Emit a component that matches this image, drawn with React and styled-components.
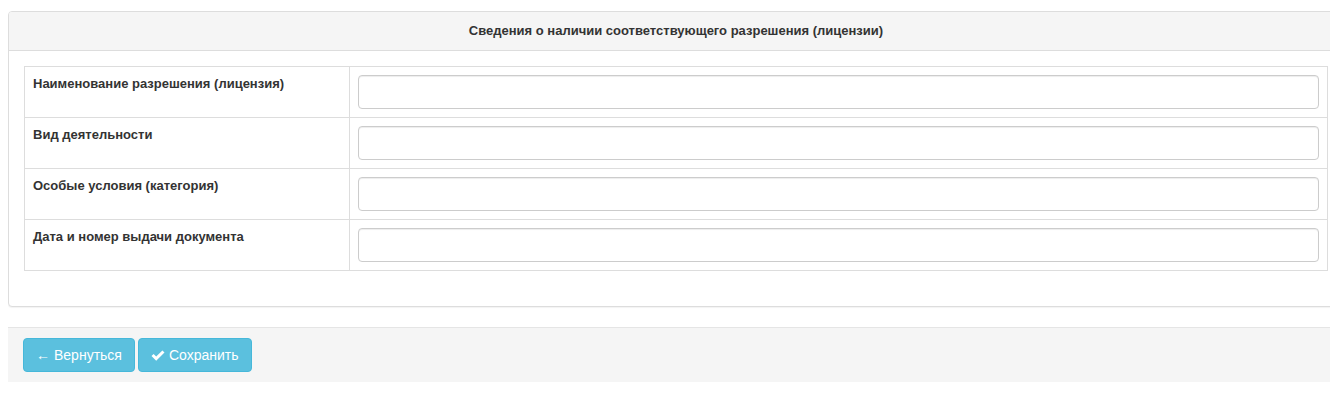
import React from "react";
import styled, { createGlobalStyle } from "styled-components";

const Global = createGlobalStyle`
  html, body { overflow: hidden; }
  body {
    margin: 8px;
    font-family: "Liberation Sans", Arial, Helvetica, sans-serif;
    font-size: 14px;
    line-height: 1.42857;
    color: #333;
    background: #fff;
  }
  * { box-sizing: border-box; }
`;

const Page = styled.div`
  width: 1336px;
  padding-top: 3px;
`;

const Panel = styled.section`
  border: 1px solid #ddd;
  border-radius: 4px;
  background: #fff;
  box-shadow: 0 1px 1px rgba(0, 0, 0, 0.05);
`;

const PanelHeading = styled.div`
  background: #f5f5f5;
  border-bottom: 1px solid #ddd;
  border-radius: 3px 3px 0 0;
  padding: 10px 15px;
  text-align: center;
  font-weight: bold;
  font-size: 13px;
  line-height: 18px;
  color: #333;
`;

const PanelBody = styled.div`
  padding: 15px;
`;

const Table = styled.table`
  width: 100%;
  border-collapse: collapse;
  border-spacing: 0;
  border: 1px solid #ddd;
  margin-bottom: 20px;
  table-layout: fixed;
`;

const Row = styled.tr``;

const Cell = styled.td`
  border: 1px solid #ddd;
  padding: 8px;
  vertical-align: top;
  width: ${(p) => (p.$label ? "325px" : "auto")};
  font-weight: ${(p) => (p.$label ? "bold" : "normal")};
  font-size: 13px;
  line-height: 18px;
`;

const Input = styled.input`
  display: block;
  width: 100%;
  height: 34px;
  padding: 6px 12px;
  font-family: inherit;
  font-size: 14px;
  color: #555;
  background: #fff;
  border: 1px solid #ccc;
  border-radius: 4px;
  box-shadow: inset 0 1px 1px rgba(0, 0, 0, 0.075);
  outline: none;
`;

const Footer = styled.div`
  margin-top: 20px;
  background: #f5f5f5;
  border-top: 1px solid #e5e5e5;
  padding: 10px 15px;
  display: flex;
  gap: 3px;
`;

const Button = styled.button`
  display: inline-flex;
  align-items: center;
  gap: 4px;
  height: 34px;
  padding: 6px 12px;
  font-family: inherit;
  font-size: 14px;
  line-height: 20px;
  color: #fff;
  background: #5bc0de;
  border: 1px solid #46b8da;
  border-radius: 4px;
  cursor: pointer;
`;

const Arrow = styled.span`
  font-size: 14px;
  line-height: 20px;
`;

const Check = () => (
  <svg width="14" height="13" viewBox="0 0 14 12" fill="#fff">
    <path d="M0.5 6.6 L2.6 4.5 L5.2 7.1 L11.4 0.9 L13.5 3 L5.2 11.3 Z" />
  </svg>
);

const rows = [
  "Наименование разрешения (лицензия)",
  "Вид деятельности",
  "Особые условия (категория)",
  "Дата и номер выдачи документа",
];

export default function App() {
  return (
    <>
      <Global />
      <Page>
        <Panel>
          <PanelHeading>Сведения о наличии соответствующего разрешения (лицензии)</PanelHeading>
          <PanelBody>
            <Table>
              <tbody>
                {rows.map((r) => (
                  <Row key={r}>
                    <Cell $label>{r}</Cell>
                    <Cell>
                      <Input type="text" />
                    </Cell>
                  </Row>
                ))}
              </tbody>
            </Table>
          </PanelBody>
        </Panel>
        <Footer>
          <Button type="button">
            <Arrow>←</Arrow>Вернуться
          </Button>
          <Button type="button">
            <Check />
            Сохранить
          </Button>
        </Footer>
      </Page>
    </>
  );
}
